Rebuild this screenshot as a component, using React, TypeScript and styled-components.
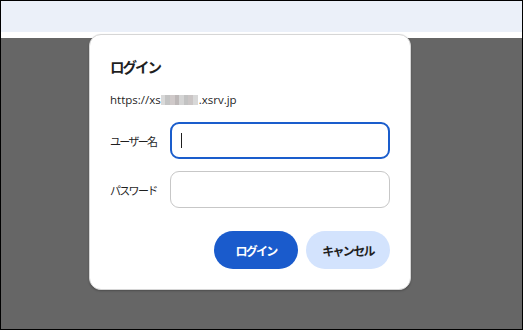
import React from 'react';
import styled, { createGlobalStyle } from 'styled-components';

const Global = createGlobalStyle`
  html, body { margin: 0; padding: 0; }
  body {
    font-family: "Noto Sans CJK JP", "Noto Sans", "Liberation Sans", sans-serif;
    background: #ffffff;
  }
`;

const Frame = styled.div`
  position: relative;
  width: 523px;
  height: 330px;
  box-sizing: border-box;
  border: 1px solid #000;
  display: flex;
  flex-direction: column;
  overflow: hidden;
`;

const TopBar = styled.div`
  height: 31px;
  background: #ebf0f9;
`;

const Strip = styled.div`
  height: 6px;
  background: #ffffff;
`;

const Backdrop = styled.div`
  flex: 1;
  background: #666666;
`;

const Dialog = styled.div`
  position: absolute;
  left: 88px;
  top: 33px;
  width: 322px;
  height: 256px;
  box-sizing: border-box;
  background: #fff;
  border: 1px solid #d6d6d6;
  border-radius: 12px;
  box-shadow: 0 1px 2px rgba(0, 0, 0, 0.25);
  padding: 21px 20px 0 20px;
  display: flex;
  flex-direction: column;
`;

const Title = styled.h1`
  margin: 0;
  font-size: 14.5px;
  letter-spacing: -2px;
  font-weight: 700;
  color: #1f1f1f;
  line-height: 22px;
`;

const Url = styled.div`
  margin-top: 14px;
  font-family: "Open Sans", "Liberation Sans", sans-serif;
  font-size: 11.5px;
  color: #1f1f1f;
  line-height: 15px;
  display: flex;
  align-items: center;
`;

const Blur = styled.span`
  display: inline-flex;
  height: 10px;
  width: 37px;
  margin: 0 1px 0 0;
`;

const BlurCell = styled.span<{ $c: string }>`
  flex: 1;
  background: ${({ $c }) => $c};
`;

const Form = styled.div`
  margin-top: 15px;
  display: grid;
  grid-template-columns: 60px 220px;
  row-gap: 12px;
  align-items: center;
`;

const Label = styled.label`
  font-size: 11px;
  letter-spacing: -1.7px;
  color: #1f1f1f;
`;

const Field = styled.div<{ $focused?: boolean }>`
  height: 37px;
  box-sizing: border-box;
  border-radius: 9px;
  border: ${({ $focused }) => ($focused ? '2px solid #1a5dcc' : '1px solid #c7c7c7')};
  display: flex;
  align-items: center;
  padding-left: ${({ $focused }) => ($focused ? '9px' : '10px')};
`;

const Caret = styled.span`
  width: 1px;
  height: 15px;
  background: #1f1f1f;
`;

const Actions = styled.div`
  margin-top: 23px;
  display: flex;
  justify-content: flex-end;
  gap: 8px;
`;

const Button = styled.button<{ $primary?: boolean }>`
  width: 84px;
  height: 38px;
  border: none;
  border-radius: 19px;
  font-family: "Noto Sans CJK JP", sans-serif;
  font-size: 12px;
  letter-spacing: -1.7px;
  font-weight: 700;
  background: ${({ $primary }) => ($primary ? '#1a5bcc' : '#d3e3fd')};
  color: ${({ $primary }) => ($primary ? '#ffffff' : '#1f1f1f')};
  padding: 0;
`;

const blur = ['#d9d9d9', '#c4c4c4', '#cfc9c9', '#bdb8b8', '#d4d4d4', '#c2c2c2', '#cac5c5', '#d8d8d8'];

export default function App() {
  return (
    <>
      <Global />
      <Frame>
        <TopBar />
        <Strip />
        <Backdrop />
        <Dialog>
          <Title>ログイン</Title>
          <Url>
            https://xs
            <Blur>
              {blur.map((c, i) => (
                <BlurCell key={i} $c={c} />
              ))}
            </Blur>
            .xsrv.jp
          </Url>
          <Form>
            <Label>ユーザー名</Label>
            <Field $focused>
              <Caret />
            </Field>
            <Label>パスワード</Label>
            <Field />
          </Form>
          <Actions>
            <Button $primary>ログイン</Button>
            <Button>キャンセル</Button>
          </Actions>
        </Dialog>
      </Frame>
    </>
  );
}
